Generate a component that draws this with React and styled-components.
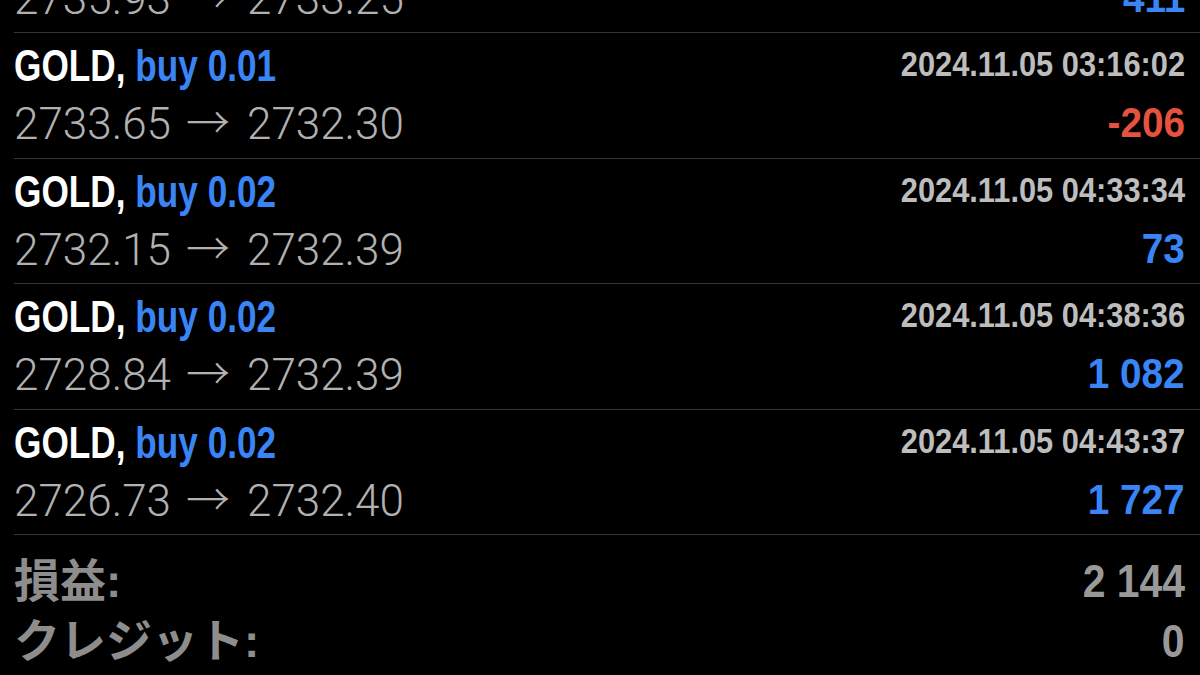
import React from 'react'
import styled, { createGlobalStyle } from 'styled-components'

const blue = '#3a85f6'
const red = '#e5523f'

const trades = [
  { symbol: 'GOLD', side: 'buy', volume: '0.01', time: '2024.11.05 02:51:44', open: '2735.93', close: '2733.25', profit: '411' },
  { symbol: 'GOLD', side: 'buy', volume: '0.01', time: '2024.11.05 03:16:02', open: '2733.65', close: '2732.30', profit: '-206' },
  { symbol: 'GOLD', side: 'buy', volume: '0.02', time: '2024.11.05 04:33:34', open: '2732.15', close: '2732.39', profit: '73' },
  { symbol: 'GOLD', side: 'buy', volume: '0.02', time: '2024.11.05 04:38:36', open: '2728.84', close: '2732.39', profit: '1 082' },
  { symbol: 'GOLD', side: 'buy', volume: '0.02', time: '2024.11.05 04:43:37', open: '2726.73', close: '2732.40', profit: '1 727' },
]

const totals = [
  { label: '損益:', value: '2 144' },
  { label: 'クレジット:', value: '0' },
]

const App = () => {
  return (
    <>
      <GlobalStyle />
      <Screen>
        <TradeList>
          {trades.map((t, i) => (
            <TradeRow key={i}>
              <RowLine $height={58}>
                <Title>
                  <Symbol>{t.symbol},</Symbol> <Side>{t.side} {t.volume}</Side>
                </Title>
                <Time>{t.time}</Time>
              </RowLine>
              <RowLine $height={58}>
                <Prices>
                  {t.open}<Arrow>→</Arrow>{t.close}
                </Prices>
                <Profit $loss={t.profit.startsWith('-')}>{t.profit}</Profit>
              </RowLine>
            </TradeRow>
          ))}
        </TradeList>

        <Summary>
          {totals.map(row => (
            <SummaryLine key={row.label}>
              <SummaryLabel>{row.label}</SummaryLabel>
              <SummaryValue>{row.value}</SummaryValue>
            </SummaryLine>
          ))}
        </Summary>
      </Screen>
    </>
  )
}

const GlobalStyle = createGlobalStyle`
  html, body {
    margin: 0;
    background: #000;
    overflow: hidden;
  }
`

const Screen = styled.div`
  height: 675px;
  overflow: hidden;
  background: #000;
  padding-left: 14px;
  font-family: "Liberation Sans", "Noto Sans CJK JP", sans-serif;
`

// list is scrolled: the first trade is mostly above the fold
const TradeList = styled.div`
  margin-top: -92.5px;
`

const TradeRow = styled.div`
  box-sizing: border-box;
  height: 125.5px;
  padding: 4px 15px 0 0;
  border-bottom: 1px solid #363636;
  display: flex;
  flex-direction: column;
`

const RowLine = styled.div`
  display: flex;
  justify-content: space-between;
  align-items: flex-start;
  height: ${props => props.$height}px;
`

const Title = styled.div`
  font-size: 44px;
  line-height: 58px;
  font-weight: 700;
  white-space: nowrap;
  transform: scaleX(0.8);
  transform-origin: left center;
`

const Symbol = styled.span`
  color: #fff;
`

const Side = styled.span`
  color: ${blue};
`

const Time = styled.div`
  font-size: 35px;
  line-height: 54px;
  font-weight: 700;
  color: #bdbdbd;
  white-space: nowrap;
  transform: scaleX(0.88);
  transform-origin: right center;
`

const Prices = styled.div`
  font-family: Roboto, "Liberation Sans", sans-serif;
  font-weight: 300;
  font-size: 44px;
  line-height: 58px;
  color: #b1b1b1;
  white-space: nowrap;
`

const Arrow = styled.span`
  font-family: "Noto Sans CJK JP", sans-serif;
  font-weight: 300;
  line-height: 0;
  margin: 0 17px 0 15px;
`

const Profit = styled.div`
  font-size: 43px;
  line-height: 55px;
  font-weight: 700;
  color: ${props => (props.$loss ? red : blue)};
  white-space: nowrap;
  transform: scaleX(0.9);
  transform-origin: right center;
`

const Summary = styled.div`
  padding: 16px 15px 0 0;
`

const SummaryLine = styled.div`
  display: flex;
  justify-content: space-between;
  align-items: baseline;
  height: 60px;
  line-height: 60px;
`

const SummaryLabel = styled.div`
  font-size: 46px;
  font-weight: 700;
  color: #8d8d8d;
`

const SummaryValue = styled.div`
  font-size: 46px;
  font-weight: 700;
  color: #999;
  transform: scaleX(0.89);
  transform-origin: right center;
`

export default App
